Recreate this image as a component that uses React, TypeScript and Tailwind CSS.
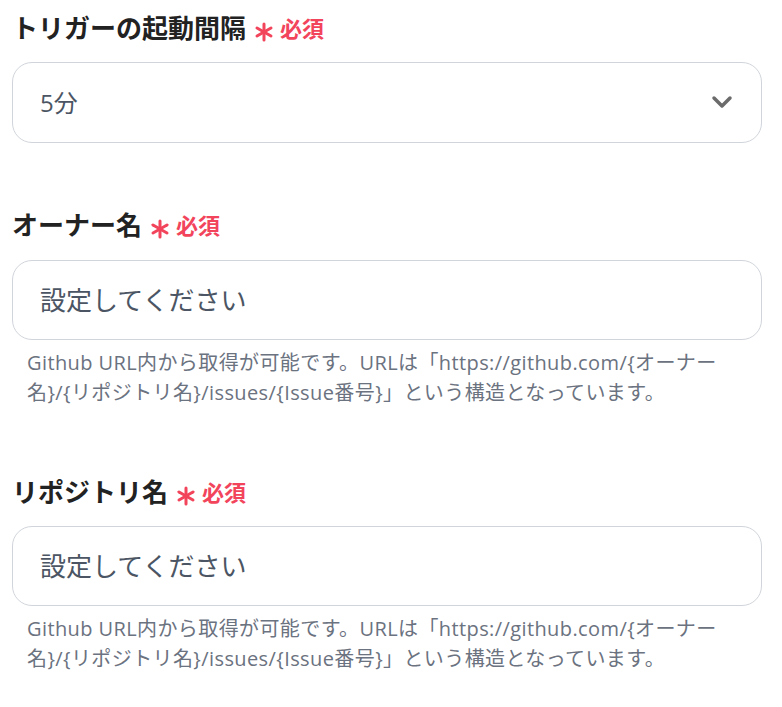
import React from "react";

const FONT = { fontFamily: '"Open Sans", "Noto Sans CJK JP", sans-serif' };

function Asterisk() {
  return (
    <svg width="20" height="20" viewBox="0 0 20 20" className="mt-[8px] ml-[8px] mr-[6px] shrink-0">
      <g stroke="#f2445b" strokeWidth="3" strokeLinecap="round">
        <line x1="10" y1="2" x2="10" y2="18" />
        <line x1="3" y1="6" x2="17" y2="14" />
        <line x1="3" y1="14" x2="17" y2="6" />
      </g>
    </svg>
  );
}

function Label({ text }: { text: string }) {
  return (
    <div className="flex items-center h-[32px]">
      <span className="text-[26px] font-bold leading-[32px] text-[#222222]">{text}</span>
      <Asterisk />
      <span className="text-[22px] font-bold leading-[32px] text-[#f2445b]">必須</span>
    </div>
  );
}

function Help() {
  return (
    <div className="mt-2 pl-[15px] text-[20px] leading-[30px] tracking-[0.4px] text-[#6b7280] whitespace-nowrap">
      <div>Github URL内から取得が可能です。URLは「https://github.com/{"{"}オーナー</div>
      <div>名{"}"}/{"{"}リポジトリ名{"}"}/issues/{"{"}Issue番号{"}"}」という構造となっています。</div>
    </div>
  );
}

export default function App() {
  return (
    <div className="w-[782px] h-[707px] bg-white pl-[12px] pr-[20px] pt-[12px]" style={FONT}>
      <Label text="トリガーの起動間隔" />
      <div className="mt-[18px] h-[81px] rounded-[20px] border border-[#d1d5db] flex items-center justify-between pl-[27px] pr-[28px]">
        <span className="text-[24px] text-[#4b5563]">5分</span>
        <svg width="22" height="14" viewBox="0 0 22 14" className="-mt-[2px]">
          <polyline points="3,3 11,11 19,3" fill="none" stroke="#6b6b6b" strokeWidth="3.5" strokeLinecap="round" strokeLinejoin="round" />
        </svg>
      </div>

      <div className="mt-[66px]">
        <Label text="オーナー名" />
      </div>
      <div className="mt-[19px] h-[80px] rounded-[20px] border border-[#d1d5db] flex items-center pl-[27px]">
        <span className="text-[26px] text-[#4b5563]">設定してください</span>
      </div>
      <Help />

      <div className="mt-[68px]">
        <Label text="リポジトリ名" />
      </div>
      <div className="mt-[18px] h-[80px] rounded-[20px] border border-[#d1d5db] flex items-center pl-[27px]">
        <span className="text-[26px] text-[#4b5563]">設定してください</span>
      </div>
      <Help />
    </div>
  );
}
